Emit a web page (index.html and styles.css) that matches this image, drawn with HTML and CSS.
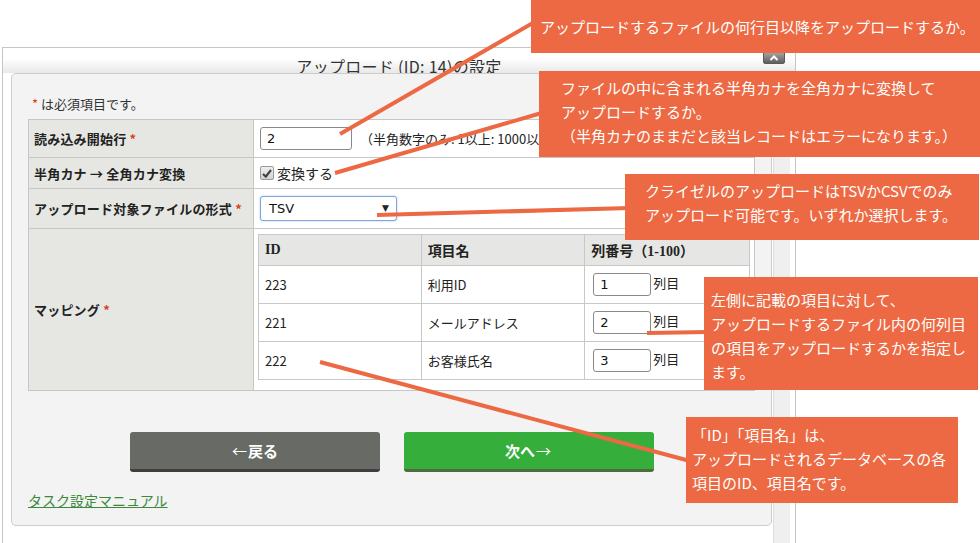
FILE: index.html
```html
<!DOCTYPE html>
<html lang="ja">
<head>
  <meta charset="UTF-8">
  <meta name="viewport" content="width=device-width, initial-scale=1.0">
  <title>アップロード (ID: 14)の設定</title>
  <link rel="stylesheet" href="styles.css">
</head>
<body>
  <div class="dialog">
    <div class="titlebar"><span class="title">アップロード (ID: 14)の設定</span></div>
    <button class="close-btn" type="button">
      <svg width="10" height="6" viewBox="0 0 10 6"><path d="M1.5 5 L5 1.5 L8.5 5" fill="none" stroke="#fff" stroke-width="2"/></svg>
    </button>

    <div class="dialog-body">
      <div class="panel">
        <p class="note"><span class="req">*</span> は必須項目です。</p>

        <table class="form-table">
          <tr class="row-start">
            <th>読み込み開始行 <span class="req">*</span></th>
            <td><input class="text-input" type="text" value="2"><span class="hint">（半角数字のみ: 1以上: 1000以下）</span></td>
          </tr>
          <tr class="row-kana">
            <th>半角カナ → 全角カナ変換</th>
            <td>
              <label class="check">
                <span class="check-box"><svg width="10" height="9" viewBox="0 0 10 9"><path d="M1 5 L3.8 7.6 L9 1" fill="none" stroke="#444" stroke-width="2.2"/></svg></span>
                変換する
              </label>
            </td>
          </tr>
          <tr class="row-format">
            <th>アップロード対象ファイルの形式 <span class="req">*</span></th>
            <td><div class="select">TSV<span class="caret">▼</span></div></td>
          </tr>
          <tr class="row-mapping">
            <th>マッピング <span class="req">*</span></th>
            <td class="mapping-cell">
              <table class="mapping">
                <tr>
                  <th class="col-id">ID</th>
                  <th class="col-name">項目名</th>
                  <th class="col-num">列番号（1-100）</th>
                </tr>
                <tr>
                  <td>223</td>
                  <td>利用ID</td>
                  <td><input class="num-input" type="text" value="1">列目</td>
                </tr>
                <tr>
                  <td>221</td>
                  <td>メールアドレス</td>
                  <td><input class="num-input" type="text" value="2">列目</td>
                </tr>
                <tr>
                  <td>222</td>
                  <td>お客様氏名</td>
                  <td><input class="num-input" type="text" value="3">列目</td>
                </tr>
              </table>
            </td>
          </tr>
        </table>

        <div class="actions">
          <button class="btn btn-back" type="button"><span class="arrow">←</span>戻る</button>
          <button class="btn btn-next" type="button">次へ<span class="arrow">→</span></button>
        </div>

        <a class="manual-link" href="#">タスク設定マニュアル</a>
      </div>
      <div class="scroll-track"></div>
    </div>
  </div>

  <!-- annotation leader lines -->
  <svg class="leaders" width="980" height="543" viewBox="0 0 980 543">
    <g stroke="#ec6943" stroke-width="4" stroke-linecap="butt">
      <line x1="340" y1="134" x2="545" y2="16"/>
      <line x1="335" y1="173" x2="545" y2="112"/>
      <line x1="377" y1="215" x2="630" y2="208"/>
      <line x1="647" y1="333" x2="708" y2="332"/>
      <line x1="320" y1="362" x2="690" y2="461"/>
    </g>
  </svg>

  <div class="callout c1">アップロードするファイルの何行目以降をアップロードするか。</div>
  <div class="callout c2">ファイルの中に含まれる半角カナを全角カナに変換して<br>アップロードするか。<br>（半角カナのままだと該当レコードはエラーになります。）</div>
  <div class="callout c3">クライゼルのアップロードはTSVかCSVでのみ<br>アップロード可能です。いずれか選択します。</div>
  <div class="callout c4">左側に記載の項目に対して、<br>アップロードするファイル内の何列目<br>の項目をアップロードするかを指定し<br>ます。</div>
  <div class="callout c5">「ID」「項目名」は、<br>アップロードされるデータベースの各<br>項目のID、項目名です。</div>
</body>
</html>
```

FILE: styles.css
```css
* {
  margin: 0;
  padding: 0;
  box-sizing: border-box;
}

body {
  position: relative;
  width: 980px;
  height: 543px;
  overflow: hidden;
  background: #ffffff;
  font-family: "Noto Sans CJK JP", "Noto Sans", sans-serif;
  font-size: 13px;
  color: #222;
}

/* dialog frame */

.dialog {
  position: relative;
  margin: 47px 0 0 2px;
  width: 794px;
  height: 496px;
  border: 1px solid #c6c6c6;
  border-bottom: none;
  padding-top: 10px;
}

.titlebar {
  height: 15px;
  border-radius: 6px 6px 0 0;
  background: linear-gradient(to bottom, #ffffff, #e9e9e9);
  text-align: center;
  overflow: visible;
}

.title {
  display: inline-block;
  margin-top: -6px;
  font-size: 16px;
  line-height: 20px;
  color: #333;
  letter-spacing: 0.3px;
}

.close-btn {
  position: absolute;
  left: 760px;
  top: 3px;
  width: 22px;
  height: 13px;
  border: 1px solid #5a5a5a;
  border-radius: 2px;
  background: linear-gradient(to bottom, #a8a8a8, #5e5e5e);
  display: flex;
  align-items: center;
  justify-content: center;
}

.dialog-body {
  display: flex;
  align-items: flex-start;
}

.panel {
  width: 761px;
  margin-left: 8px;
  background: #f3f3f3;
  border: 1px solid #cdcdcd;
  border-radius: 5px;
  padding: 20px 16px 15px;
}

.scroll-track {
  width: 17px;
  height: 480px;
  margin-left: 1px;
  background: #efefef;
  border-left: 1px solid #dddddd;
}

.note {
  height: 20px;
  line-height: 20px;
  margin-bottom: 5px;
  padding-left: 4px;
  color: #333;
}

.req {
  color: #d9421c;
}

/* form table */

.form-table {
  width: 727px;
  border-collapse: collapse;
}

.form-table > tbody > tr > th,
.form-table > tbody > tr > td {
  border: 1px solid #c6c6c6;
}

.form-table > tbody > tr > th {
  width: 225px;
  background: #e6e7e3;
  text-align: left;
  padding: 0 5px;
  font-weight: bold;
  color: #222;
  letter-spacing: 0.2px;
}

.form-table > tbody > tr > td {
  background: #ffffff;
  padding: 0 6px;
}

.row-start { height: 38px; }
.row-kana { height: 31px; }
.row-format { height: 40px; }
.row-mapping { height: 162px; }

.text-input,
.num-input {
  height: 23px;
  border: 1px solid #8a8a8a;
  border-radius: 3px;
  padding: 0 6px;
  font-family: "DejaVu Sans", sans-serif;
  font-size: 13px;
  color: #111;
  background: #fff;
  vertical-align: middle;
}

.text-input {
  width: 92px;
}

.hint {
  margin-left: 8px;
  vertical-align: middle;
}

.check {
  display: flex;
  align-items: center;
  gap: 3px;
  font-size: 14px;
}

.check-box {
  width: 14px;
  height: 14px;
  border: 1px solid #9a9a9a;
  border-radius: 2px;
  background: linear-gradient(to bottom, #f0f0f0, #d2d2d2);
  display: flex;
  align-items: center;
  justify-content: center;
}

.select {
  position: relative;
  width: 137px;
  height: 25px;
  border: 1px solid #7ea6dc;
  border-radius: 3px;
  box-shadow: 0 0 2px rgba(80, 140, 220, 0.5);
  padding-left: 8px;
  font-family: "DejaVu Sans", sans-serif;
  font-size: 13px;
  line-height: 23px;
  color: #111;
  background: #fff;
}

.caret {
  position: absolute;
  right: 7px;
  top: 0;
  font-size: 9px;
  color: #222;
}

/* mapping */

.form-table > tbody > tr > td.mapping-cell {
  vertical-align: top;
  padding: 5px 4px 10px;
}

.mapping {
  width: 492px;
  border-collapse: collapse;
}

.mapping th,
.mapping td {
  border: 1px solid #c8c8c8;
  padding: 0 6px;
  text-align: left;
}

.mapping th {
  height: 31px;
  background: #e6e7e4;
  font-family: "Liberation Serif", "Noto Sans CJK JP", serif;
  font-weight: bold;
  font-size: 14px;
}

.mapping td {
  height: 38px;
  background: #fff;
}

.col-id { width: 163px; }
.col-name { width: 164px; }
.col-num { width: 165px; }

.num-input {
  width: 58px;
  margin: 0 2px 0 2px;
}

/* buttons */

.actions {
  display: flex;
  justify-content: center;
  gap: 24px;
  margin-top: 41px;
}

.btn {
  width: 250px;
  height: 40px;
  border: none;
  border-radius: 3px;
  font-family: "Noto Sans CJK JP", sans-serif;
  font-size: 15px;
  font-weight: bold;
  color: #fff;
}

.btn .arrow {
  font-weight: normal;
  margin: 0 1px;
}

.btn-back {
  background: #686b65;
  border-bottom: 3px solid #3e3e3e;
}

.btn-next {
  background: #35ae3c;
  border-bottom: 3px solid #4e6c3f;
}

.manual-link {
  display: inline-block;
  margin-top: 19px;
  font-size: 14px;
  line-height: 18px;
  color: #3a8a3a;
  text-decoration: underline;
}

/* annotations */

.leaders {
  position: absolute;
  left: 0;
  top: 0;
  pointer-events: none;
}

.callout {
  position: absolute;
  background: #ec6943;
  color: #ffffff;
  font-size: 15px;
  line-height: 24px;
  white-space: nowrap;
}

.c1 {
  left: 531px;
  top: 0;
  width: 449px;
  height: 53px;
  padding: 15px 0 0 9px;
}

.c2 {
  left: 539px;
  top: 71px;
  width: 441px;
  height: 86px;
  padding: 5px 0 0 22px;
}

.c3 {
  left: 625px;
  top: 174px;
  width: 354px;
  height: 66px;
  padding: 5px 0 0 20px;
}

.c4 {
  left: 704px;
  top: 277px;
  width: 274px;
  height: 113px;
  padding: 11px 0 0 7px;
}

.c5 {
  left: 686px;
  top: 417px;
  width: 272px;
  height: 86px;
  padding: 6px 0 0 6px;
}
```
